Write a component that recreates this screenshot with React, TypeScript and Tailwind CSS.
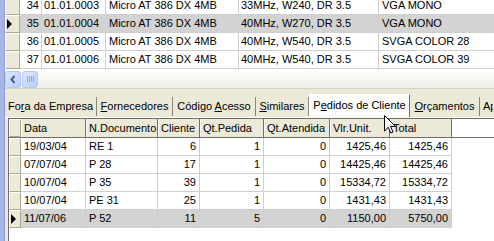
import React from 'react';

const topRows = [
  { n: '34', code: '01.01.0003', desc: 'Micro AT 386 DX 4MB', spec: '33MHz, W240, DR 3.5', video: 'VGA MONO' },
  { n: '35', code: '01.01.0004', desc: 'Micro AT 386 DX 4MB', spec: '40MHz, W270, DR 3.5', video: 'VGA MONO', sel: true },
  { n: '36', code: '01.01.0005', desc: 'Micro AT 386 DX 4MB', spec: '40MHz, W540, DR 3.5', video: 'SVGA COLOR 28' },
  { n: '37', code: '01.01.0006', desc: 'Micro AT 386 DX 4MB', spec: '40MHz, W540, DR 3.5', video: 'SVGA COLOR 39' },
];

const pedidos = [
  { data: '19/03/04', doc: 'RE 1', cli: '6', ped: '1', at: '0', unit: '1425,46', total: '1425,46' },
  { data: '07/07/04', doc: 'P 28', cli: '17', ped: '1', at: '0', unit: '14425,46', total: '14425,46' },
  { data: '10/07/04', doc: 'P 35', cli: '39', ped: '1', at: '0', unit: '15334,72', total: '15334,72' },
  { data: '10/07/04', doc: 'PE 31', cli: '25', ped: '1', at: '0', unit: '1431,43', total: '1431,43' },
  { data: '11/07/06', doc: 'P 52', cli: '11', ped: '5', at: '0', unit: '1150,00', total: '5750,00', sel: true },
];

function Pointer() {
  return (
    <svg width="7" height="10" viewBox="0 0 7 10" className="block">
      <path d="M1 0 L6 5 L1 10 Z" fill="#000" />
    </svg>
  );
}

// indicator cell (3D beige button face)
function Indicator({ sel, w }: { sel?: boolean; w: string }) {
  return (
    <div
      className={`${w} h-full shrink-0 flex items-center bg-[#ece9d8] border-t border-l border-t-white border-l-white border-r border-b border-r-[#aca899] border-b-[#aca899]`}
    >
      {sel && <Pointer />}
    </div>
  );
}

function Tab({ w, children }: { w: string; children: React.ReactNode }) {
  return (
    <div className={`${w} h-[19px] mb-[1px] shrink-0 flex items-center justify-center border-r border-r-[#8a877a] whitespace-nowrap`}>
      <span>{children}</span>
    </div>
  );
}

function ScrollButton({ w, children }: { w: string; children: React.ReactNode }) {
  return (
    <div className={`${w} h-[17px] shrink-0 rounded-[3px] border border-[#b6c9f4] bg-gradient-to-br from-[#dde7fe] to-[#b9cdfb] flex items-center justify-center`}>
      {children}
    </div>
  );
}

export default function App() {
  return (
    <div
      className="w-[494px] h-[241px] overflow-hidden relative flex bg-white text-black text-[11px] leading-none"
      style={{ fontFamily: '"Liberation Sans", Arial, sans-serif' }}
    >
      {/* window edge */}
      <div className="w-[5px] h-full shrink-0 bg-[#a9b6e4] border-r border-r-[#8c9fd8]" />

      <div className="flex-1 flex flex-col min-w-0">
        {/* Produtos grid */}
        <div className="h-[70px] overflow-hidden shrink-0">
          <div className="-mt-[3px]">
            {topRows.map((r) => (
              <div key={r.n} className={`flex h-[18px] ${r.sel ? 'bg-[#d3d3d3]' : ''}`}>
                <Indicator sel={r.sel} w="w-[15px]" />
                <div className="w-[22px] shrink-0 flex items-center justify-end pr-[2px] border-r border-b border-[#cfcfcf]">{r.n}</div>
                <div className="w-[64px] shrink-0 flex items-center pl-[2px] border-r border-b border-[#cfcfcf]">{r.code}</div>
                <div className="w-[133px] shrink-0 flex items-center pl-[3px] border-r border-b border-[#cfcfcf]">{r.desc}</div>
                <div className="w-[140px] shrink-0 flex items-center pl-[2px] border-r border-b border-[#cfcfcf]">{r.spec}</div>
                <div className="flex-1 flex items-center pl-[3px] border-b border-[#cfcfcf] whitespace-nowrap">{r.video}</div>
              </div>
            ))}
          </div>
        </div>

        {/* horizontal scrollbar */}
        <div className="h-[19px] shrink-0 flex items-center gap-[1px] bg-gradient-to-b from-[#fefefd] to-[#eeede5] border-b border-b-[#d6d3c4]">
          <ScrollButton w="w-[16px]">
            <svg width="6" height="9" viewBox="0 0 6 9">
              <path d="M4.5 1 L1.5 4.5 L4.5 8" stroke="#4d6185" strokeWidth="2" fill="none" />
            </svg>
          </ScrollButton>
          <ScrollButton w="w-[16px]">
            <div className="flex gap-[1px]">
              <div className="w-[1px] h-[6px] bg-[#8ea6e6]" />
              <div className="w-[1px] h-[6px] bg-[#8ea6e6]" />
              <div className="w-[1px] h-[6px] bg-[#8ea6e6]" />
              <div className="w-[1px] h-[6px] bg-[#8ea6e6]" />
            </div>
          </ScrollButton>
        </div>

        {/* tab strip */}
        <div className="h-[29px] shrink-0 flex items-end bg-[#ece9d8] border-b border-b-white overflow-hidden">
          <Tab w="w-[92px]">Fo<u className="underline-offset-1">r</u>a da Empresa</Tab>
          <Tab w="w-[76px]"><u className="underline-offset-1">F</u>ornecedores</Tab>
          <Tab w="w-[83px]">Código <u className="underline-offset-1">A</u>cesso</Tab>
          <Tab w="w-[53px]"><u className="underline-offset-1">S</u>imilares</Tab>
          <div className="w-[101px] h-[24px] -mb-[1px] shrink-0 flex items-center justify-center bg-[#fbfbf8] border-t border-l border-t-white border-l-white border-r border-r-[#716f64] pb-[3px] whitespace-nowrap">
            <span>P<u className="underline-offset-1">e</u>didos de Cliente</span>
          </div>
          <Tab w="w-[70px]"><u className="underline-offset-1">O</u>rçamentos</Tab>
          <div className="h-[19px] mb-[1px] pl-[3px] w-[13px] overflow-hidden flex items-center whitespace-nowrap">
            <span>A<u className="underline-offset-1">p</u></span>
          </div>
        </div>

        {/* Pedidos de Cliente grid */}
        <div className="flex-1 flex bg-[#ece9d8]">
          <div className="w-[3px] shrink-0" />
          <div className="flex-1 bg-white border-t border-l border-[#716f64]">
            <div className="flex h-[19px] bg-[#ece9d8] border-b border-b-[#716f64]">
              <Indicator w="w-[12px]" />
              {[
                ['w-[65px]', 'Data'],
                ['w-[72px]', 'N.Documento'],
                ['w-[42px]', 'Cliente'],
                ['w-[64px]', 'Qt.Pedida'],
                ['w-[66px]', 'Qt.Atendida'],
                ['w-[60px]', 'Vlr.Unit.'],
                ['w-[62px]', 'Total'],
              ].map(([w, t]) => (
                <div key={t} className={`${w} shrink-0 flex items-center pl-[2px] border-l border-l-white border-r border-r-[#716f64] whitespace-nowrap`}>
                  {t}
                </div>
              ))}
              <div className="flex-1 bg-white" />
            </div>
            {pedidos.map((p, i) => (
              <div key={i} className="flex h-[18px]">
                <Indicator sel={p.sel} w="w-[12px]" />
                <div className={`flex ${p.sel ? 'bg-[#d3d3d3]' : ''}`}>
                  <div className="w-[65px] shrink-0 flex items-center pl-[3px] border-r border-b border-[#cfcfcf]">{p.data}</div>
                  <div className="w-[72px] shrink-0 flex items-center pl-[3px] border-r border-b border-[#cfcfcf]">{p.doc}</div>
                  <div className="w-[42px] shrink-0 flex items-center justify-end pr-[3px] border-r border-b border-[#cfcfcf]">{p.cli}</div>
                  <div className="w-[64px] shrink-0 flex items-center justify-end pr-[3px] border-r border-b border-[#cfcfcf]">{p.ped}</div>
                  <div className="w-[66px] shrink-0 flex items-center justify-end pr-[3px] border-r border-b border-[#cfcfcf]">{p.at}</div>
                  <div className="w-[60px] shrink-0 flex items-center justify-end pr-[3px] border-r border-b border-[#cfcfcf]">{p.unit}</div>
                  <div className="w-[62px] shrink-0 flex items-center justify-end pr-[3px] border-r border-b border-[#cfcfcf]">{p.total}</div>
                </div>
              </div>
            ))}
          </div>
        </div>
      </div>

      {/* mouse cursor */}
      <svg width="12" height="19" viewBox="0 0 12 19" className="absolute left-[384px] top-[115px]">
        <path d="M0.5 0.5 L0.5 16 L4.3 12.3 L6.8 18 L9 17 L6.6 11.4 L11.5 11.4 Z" fill="#fff" stroke="#000" strokeWidth="1" />
      </svg>
    </div>
  );
}
